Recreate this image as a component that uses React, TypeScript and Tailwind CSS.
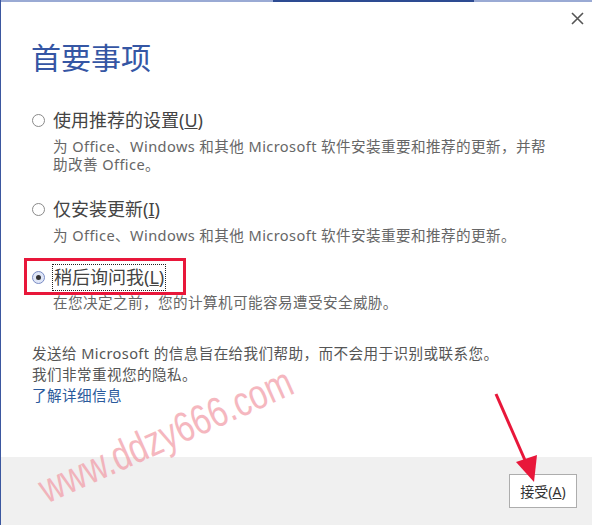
import React from "react";

const font = '"Noto Sans", "Noto Sans CJK SC", sans-serif';

function Radio({ checked }: { checked?: boolean }) {
  return (
    <span
      className={`flex items-center justify-center w-[13px] h-[13px] rounded-full border shrink-0 ${
        checked ? "border-[#7a8cc4] bg-[#dfe6f7]" : "border-[#8a8a8a] bg-white"
      }`}
    >
      {checked && <span className="w-[5px] h-[5px] rounded-full bg-[#333]" />}
    </span>
  );
}

export default function App() {
  return (
    <div
      className="relative w-[592px] h-[525px] bg-white flex flex-col border-l border-[#3b57a0] overflow-hidden"
      style={{ fontFamily: font }}
    >
      {/* top strip */}
      <div className="flex h-[2px] w-full">
        <div className="w-[272px] bg-[#9aaad4]" />
        <div className="w-[201px] bg-[#2d4b92]" />
        <div className="flex-1 bg-[#9aaad4]" />
      </div>

      <button className="absolute right-[8px] top-[11px] w-[14px] h-[14px] flex items-center justify-center">
        <svg width="13" height="13" viewBox="0 0 13 13">
          <path d="M1 1 L12 12 M12 1 L1 12" stroke="#555" strokeWidth="1.6" />
        </svg>
      </button>

      <div className="flex-1 pl-[31px] pr-[34px]">
        <h1 className="mt-[36px] -ml-[1px] text-[30px] leading-[40px] text-[#3556a4]">首要事项</h1>

        <div className="mt-[30px] flex items-center gap-[8px] h-[24px]">
          <Radio />
          <span className="text-[18px] text-[#444]">
            使用推荐的设置(<span className="underline">U</span>)
          </span>
        </div>
        <p className="mt-[5px] pl-[21px] text-[14.6px] tracking-[0.4px] leading-[18px] text-[#666]">
          为 Office、Windows 和其他 Microsoft 软件安装重要和推荐的更新，并帮助改善 Office。
        </p>

        <div className="mt-[24px] flex items-center gap-[8px] h-[24px]">
          <Radio />
          <span className="text-[18px] text-[#444]">
            仅安装更新(<span className="underline">I</span>)
          </span>
        </div>
        <p className="mt-[5px] pl-[21px] text-[14.6px] tracking-[0.4px] leading-[18px] text-[#666]">
          为 Office、Windows 和其他 Microsoft 软件安装重要和推荐的更新。
        </p>

        <div className="mt-[21px] flex items-center gap-[7px] h-[24px]">
          <Radio checked />
          <span className="text-[18px] text-[#444] border border-dotted border-[#222] px-[1px] leading-[25px]">
            稍后询问我(<span className="underline">L</span>)
          </span>
        </div>
        <p className="mt-[4px] pl-[21px] text-[14.6px] tracking-[0.4px] leading-[18px] text-[#666]">
          在您决定之前，您的计算机可能容易遭受安全威胁。
        </p>

        <div className="mt-[32px] text-[14.6px] tracking-[0.4px] leading-[21px] text-[#555]">
          <p>发送给 Microsoft 的信息旨在给我们帮助，而不会用于识别或联系您。</p>
          <p>我们非常重视您的隐私。</p>
          <a className="text-[#2a5a9c]">了解详细信息</a>
        </div>
      </div>

      <div className="h-[68px] bg-[#f0f0f0] flex justify-end items-start pt-[17px] pr-[15px]">
        <button className="w-[68px] h-[34px] bg-white border border-[#adadad] text-[14px] text-[#333]">
          接受(<span className="underline">A</span>)
        </button>
      </div>

      {/* annotation box */}
      <div className="absolute left-[23px] top-[258px] w-[162px] h-[37px] border-[3px] border-[#e8173a]" />

      {/* watermark */}
      <div
        className="absolute left-[40px] top-[470px] text-[42px] leading-[42px] text-[#f29aa5] opacity-70 rotate-[-24deg] scale-x-[0.78] origin-left whitespace-nowrap"
        style={{ fontFamily: '"Liberation Sans", sans-serif' }}
      >
        www.ddzy666.com
      </div>

      {/* arrow */}
      <svg className="absolute left-[480px] top-[385px]" width="70" height="105" viewBox="0 0 70 105">
        <line x1="15" y1="9" x2="47" y2="82" stroke="#e8173a" strokeWidth="3" />
        <polygon points="53,97 35,77 56,70" fill="#e8173a" />
      </svg>
    </div>
  );
}
